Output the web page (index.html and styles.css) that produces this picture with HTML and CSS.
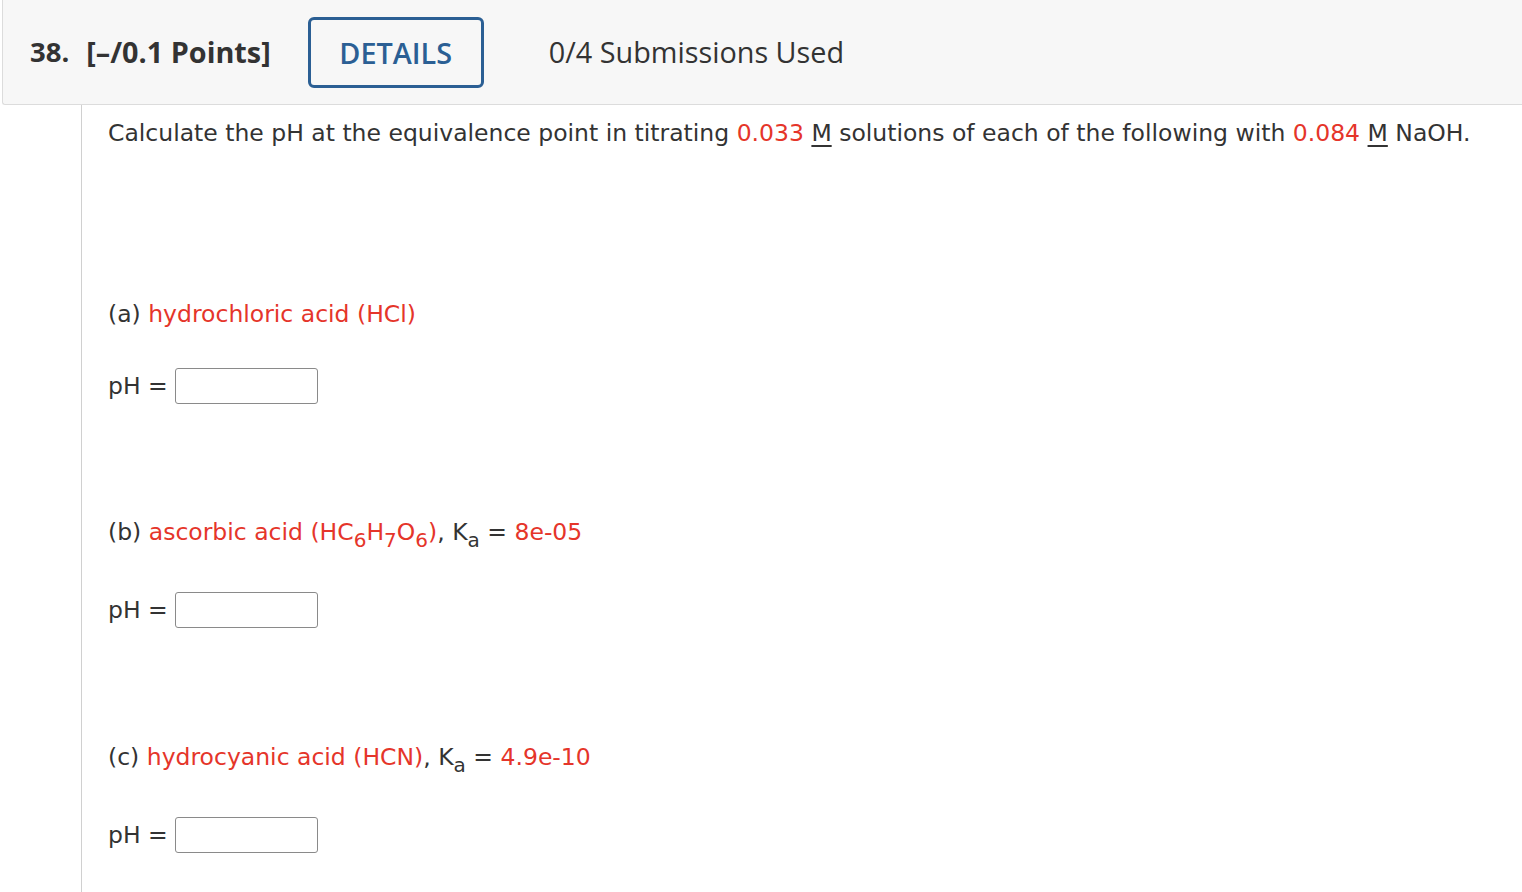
FILE: index.html
```html
<!DOCTYPE html>
<html>
<head>
<meta charset="utf-8">
<link rel="stylesheet" href="styles.css">
</head>
<body>
<div class="header">
  <span class="qnum">38.</span>
  <span class="points">[–/0.1 Points]</span>
  <span class="details">DETAILS</span>
  <span class="subs">0/4 Submissions Used</span>
</div>
<div class="content">
  <p class="intro">Calculate the pH at the equivalence point in titrating <span class="red">0.033</span> <u>M</u> solutions of each of the following with <span class="red">0.084</span> <u>M</u> NaOH.</p>
  <div class="part part-a">
    <p class="label">(a) <span class="red">hydrochloric acid (HCl)</span></p>
    <p class="answer">pH = <span class="box"></span></p>
  </div>
  <div class="part part-b">
    <p class="label">(b) <span class="red">ascorbic acid (HC<sub>6</sub>H<sub>7</sub>O<sub>6</sub>)</span>, K<sub>a</sub> = <span class="red">8e-05</span></p>
    <p class="answer">pH = <span class="box"></span></p>
  </div>
  <div class="part part-c">
    <p class="label">(c) <span class="red">hydrocyanic acid (HCN)</span>, K<sub>a</sub> = <span class="red">4.9e-10</span></p>
    <p class="answer">pH = <span class="box"></span></p>
  </div>
</div>
</body>
</html>
```

FILE: styles.css
```css
html, body {
  margin: 0;
  padding: 0;
  background: #fff;
  overflow: hidden;
}
body {
  width: 1522px;
  height: 892px;
}
.header {
  display: flex;
  align-items: center;
  box-sizing: border-box;
  height: 105px;
  margin-left: 2px;
  padding-left: 27px;
  padding-bottom: 2px;
  background: #f7f7f7;
  border: 1px solid #dcdcdc;
  border-right: none;
  border-top: none;
  border-radius: 0 0 0 3px;
  font-family: "Open Sans", sans-serif;
  color: #333;
}
.qnum {
  font-weight: 700;
  font-size: 27.5px;
  margin-right: 17px;
}
.points {
  font-weight: 700;
  font-size: 28.8px;
  margin-right: 37px;
}
.details {
  display: flex;
  align-items: center;
  justify-content: center;
  box-sizing: border-box;
  width: 176px;
  height: 71px;
  border: 3px solid #2b5f94;
  border-radius: 6px;
  color: #2b5f94;
  font-weight: 600;
  font-size: 28.8px;
  margin-right: 65px;
  margin-top: 2px;
}
.subs {
  font-size: 28.8px;
  font-weight: 400;
  color: #333;
}
.content {
  margin-left: 81px;
  border-left: 1px solid #d0d0d0;
  padding-left: 26px;
  height: 787px;
  font-family: "DejaVu Sans", Verdana, sans-serif;
  font-size: 23.5px;
  color: #333;
}
.content p {
  margin: 0;
  line-height: 30px;
}
.intro {
  padding-top: 13px;
}
.red {
  color: #e5352a;
}
u {
  text-decoration-thickness: 2px;
  text-underline-offset: 4px;
}
sub {
  font-size: 20px;
  vertical-align: -7px;
  line-height: 0;
}
.part-a {
  margin-top: 151px;
}
.part-b {
  margin-top: 113px;
}
.part-c {
  margin-top: 114px;
}
.answer {
  display: flex;
  align-items: center;
  margin-top: 39px !important;
}
.part-b .answer,
.part-c .answer {
  margin-top: 45px !important;
}
.box {
  display: inline-block;
  box-sizing: border-box;
  width: 143px;
  height: 36px;
  border: 1px solid #8a8a8a;
  border-radius: 3px;
  margin-left: 7px;
  background: #fff;
}
```
